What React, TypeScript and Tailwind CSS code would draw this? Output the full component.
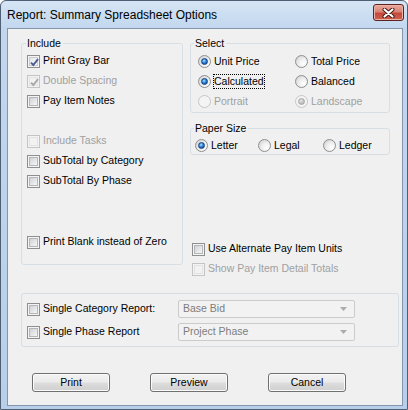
import React from "react";

type BoxProps = { checked?: boolean; disabled?: boolean };

function Check({ checked = false, disabled = false }: BoxProps) {
  return (
    <span
      className={`flex h-[13px] w-[13px] shrink-0 items-center justify-center border p-[1px] ${
        disabled ? "border-[#c4c4c4] bg-[#f4f4f4]" : "border-[#8e8f8f] bg-[#f4f4f4]"
      }`}
    >
      <span
        className={`relative flex h-full w-full items-center justify-center border ${
          disabled
            ? "border-[#e2e2e2] bg-[#f2f2f2]"
            : checked
            ? "border-[#c9ccd1] bg-[linear-gradient(135deg,#e4e6e9_0%,#fbfbfb_100%)]"
            : "border-[#b3b7bc] bg-[linear-gradient(135deg,#cfd2d6_0%,#f6f6f6_100%)]"
        }`}
      >
        {checked && (
          <svg
            width="11"
            height="11"
            viewBox="0 0 11 11"
            className="absolute left-[-1px] top-[-1px]"
          >
            <path
              d="M2 5.6 L4.3 8 L9 2.2"
              fill="none"
              stroke={disabled ? "#a8a8a8" : "#4a5e94"}
              strokeWidth="1.9"
            />
          </svg>
        )}
      </span>
    </span>
  );
}

function Radio({ checked = false, disabled = false }: BoxProps) {
  return (
    <span
      className={`flex h-[13px] w-[13px] shrink-0 items-center justify-center rounded-full border ${
        disabled
          ? "border-[#c6c6c6] bg-[#f4f4f4]"
          : "border-[#8e8f8f] bg-[radial-gradient(circle_at_70%_70%,#ffffff_0%,#eeeeee_45%,#c8cacd_100%)]"
      }`}
    >
      {checked && !disabled && (
        <span className="h-[7px] w-[7px] rounded-full border border-[#16407c] bg-[radial-gradient(circle_at_40%_35%,#b6e2ff_0%,#3a8ee0_40%,#1458b0_75%,#0d3c7c_100%)]" />
      )}
      {checked && disabled && (
        <span className="h-[7px] w-[7px] rounded-full border border-[#a9a9a9] bg-[radial-gradient(circle_at_40%_35%,#e8e8e8_0%,#bdbdbd_60%,#a8a8a8_100%)]" />
      )}
    </span>
  );
}

function CheckRow({
  label,
  checked = false,
  disabled = false,
  className = "",
}: {
  label: string;
  checked?: boolean;
  disabled?: boolean;
  className?: string;
}) {
  return (
    <div className={`flex h-[20px] items-center gap-[3px] ${className}`}>
      <Check checked={checked} disabled={disabled} />
      <span className={`whitespace-nowrap ${disabled ? "text-[#a0a0a0]" : "text-black"}`}>{label}</span>
    </div>
  );
}

function RadioRow({
  label,
  checked = false,
  disabled = false,
  focus = false,
  className = "",
}: {
  label: string;
  checked?: boolean;
  disabled?: boolean;
  focus?: boolean;
  className?: string;
}) {
  return (
    <div className={`flex items-center gap-[3px] ${className}`}>
      <Radio checked={checked} disabled={disabled} />
      <span
        className={`whitespace-nowrap leading-[13px] ${disabled ? "text-[#a0a0a0]" : "text-black"} ${
          focus ? "[outline:1px_dotted_#000] [outline-offset:0px]" : ""
        }`}
      >
        {label}
      </span>
    </div>
  );
}

function Combo({ value }: { value: string }) {
  return (
    <div className="flex h-[18px] w-[177px] items-center justify-between rounded-[2px] border border-[#cbcbcb] bg-[#f2f2f2] pl-[4px] pr-[7px] text-[#7d7d7d]">
      <span className="whitespace-nowrap">{value}</span>
      <svg width="7" height="4" viewBox="0 0 7 4">
        <path d="M0 0 H7 L3.5 4 Z" fill="#ababab" />
      </svg>
    </div>
  );
}

function Btn({ label }: { label: string }) {
  return (
    <button className="h-[19px] w-[78px] rounded-[3px] border border-[#707070] bg-[linear-gradient(#f2f2f2_0%,#ebebeb_48%,#dddddd_52%,#cfcfcf_100%)] text-black leading-[15px] shadow-[inset_0_0_0_1px_#fbfbfb]">
      {label}
    </button>
  );
}

export default function App() {
  return (
    <div className="h-[410px] w-[408px] bg-white">
      <div className="flex h-[410px] w-[408px] flex-col rounded-t-[6px] border border-[#4f5f74] bg-[linear-gradient(#d6e5f5_0px,#c2d7ee_27px,#b7cfe9_410px)] font-['Liberation_Sans',Arial,sans-serif] text-[10.5px]">
        {/* Title bar */}
        <div className="flex h-[27px] shrink-0 items-center justify-between pl-[6px] pr-[3px]">
          <span className="text-[12px] leading-[14px] text-black">Report: Summary Spreadsheet Options</span>
          <div className="mb-[4px] flex h-[17px] w-[31px] items-center justify-center rounded-[3px] border border-[#5a231d] bg-[linear-gradient(#e9aa9e_0%,#d98476_45%,#c5493b_55%,#cc6251_100%)] shadow-[inset_0_0_0_1px_#eeb3a8]">
            <svg width="13" height="10" viewBox="0 0 13 10">
              <path d="M2.5 1.5 L10.5 8.5 M10.5 1.5 L2.5 8.5" stroke="#3d1612" strokeWidth="4" strokeLinecap="round" />
              <path d="M2.5 1.5 L10.5 8.5 M10.5 1.5 L2.5 8.5" stroke="#ffffff" strokeWidth="2.2" strokeLinecap="round" />
            </svg>
          </div>
        </div>

        {/* Client area */}
        <div className="ml-[6px] h-[378px] w-[396px] border border-[#8396ad] bg-[#f0f0f0]">
          <div className="flex flex-col pl-[13px] pt-[8px]">
            <div className="flex items-start gap-[7px]">
              {/* Include */}
              <fieldset className="w-[162px] rounded-[3px] border border-[#d5dfe5]">
                <legend className="ml-[4px] pl-[1px] pr-[2px] leading-[13px] text-black">Include</legend>
                <div className="flex flex-col pb-[12px] pl-[5px] pt-[1px]">
                  <CheckRow label="Print Gray Bar" checked />
                  <CheckRow label="Double Spacing" checked disabled />
                  <CheckRow label="Pay Item Notes" />
                  <CheckRow label="Include Tasks" disabled className="mt-[20px]" />
                  <CheckRow label="SubTotal by Category" />
                  <CheckRow label="SubTotal By Phase" />
                  <CheckRow label="Print Blank instead of Zero" className="mt-[41px]" />
                </div>
              </fieldset>

              {/* Right column */}
              <div className="flex w-[200px] flex-col">
                <fieldset className="rounded-[3px] border border-[#d5dfe5]">
                  <legend className="ml-[3px] pl-[1px] pr-[2px] leading-[13px] text-black">Select</legend>
                  <div className="grid grid-cols-[97px_1fr] pb-[1px] pl-[7px] pt-[1px]">
                    <RadioRow label="Unit Price" checked className="h-[20px]" />
                    <RadioRow label="Total Price" className="h-[20px]" />
                    <RadioRow label="Calculated" checked focus className="h-[20px]" />
                    <RadioRow label="Balanced" className="h-[20px]" />
                    <RadioRow label="Portrait" disabled className="h-[20px]" />
                    <RadioRow label="Landscape" checked disabled className="h-[20px]" />
                  </div>
                </fieldset>

                <fieldset className="mt-[9px] rounded-[3px] border border-[#d5dfe5]">
                  <legend className="ml-[3px] pl-[1px] pr-[2px] leading-[13px] text-black">Paper Size</legend>
                  <div className="flex h-[19px] items-center pl-[4px] pt-[1px]">
                    <RadioRow label="Letter" checked className="w-[63px]" />
                    <RadioRow label="Legal" className="w-[65px]" />
                    <RadioRow label="Ledger" />
                  </div>
                </fieldset>

                <div className="mt-[84px] flex flex-col pl-[2px]">
                  <CheckRow label="Use Alternate Pay Item Units" />
                  <CheckRow label="Show Pay Item Detail Totals" disabled />
                </div>
              </div>
            </div>

            {/* Bottom group */}
            <fieldset className="mt-[14px] w-[378px] rounded-[3px] border border-[#d5dfe5]">
              <div className="flex flex-col gap-[3px] pb-[4px] pl-[5px] pt-[5px]">
                <div className="flex h-[20px] items-center">
                  <CheckRow label="Single Category Report:" className="w-[151px]" />
                  <Combo value="Base Bid" />
                </div>
                <div className="flex h-[20px] items-center">
                  <CheckRow label="Single Phase Report" className="w-[151px]" />
                  <Combo value="Project Phase" />
                </div>
              </div>
            </fieldset>

            {/* Buttons */}
            <div className="mt-[26px] flex gap-[40px] pl-[11px]">
              <Btn label="Print" />
              <Btn label="Preview" />
              <Btn label="Cancel" />
            </div>
          </div>
        </div>
      </div>
    </div>
  );
}
